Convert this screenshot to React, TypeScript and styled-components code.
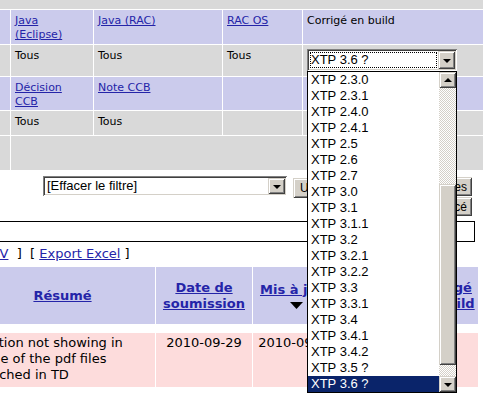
import React from "react";
import styled, { createGlobalStyle } from "styled-components";

const WIN_FACE = "#d4d0c8";
const GRAY = "#d9d9d9";
const LAVENDER = "#cbcbec";
const PINK = "#fddcdc";
const LINK = "#2424a8";

const RAISED = `inset 1px 1px ${WIN_FACE}, inset -1px -1px #404040, inset 2px 2px #fff, inset -2px -2px #808080`;
const SUNKEN = `inset 1px 1px #808080, inset -1px -1px #fff, inset 2px 2px #404040, inset -2px -2px ${WIN_FACE}`;

const VERSIONS = [
  "2.3.0", "2.3.1", "2.4.0", "2.4.1", "2.5", "2.6", "2.7", "3.0", "3.1", "3.1.1",
  "3.2", "3.2.1", "3.2.2", "3.3", "3.3.1", "3.4", "3.4.1", "3.4.2", "3.5 ?", "3.6 ?",
].map((v) => `XTP ${v}`);

const GlobalStyle = createGlobalStyle`
  html, body {
    margin: 0;
    padding: 0;
    background: #fff;
  }
  body {
    font-family: Verdana, "DejaVu Sans", sans-serif;
    color: #000;
  }
`;

const Viewport = styled.div`
  width: 483px;
  height: 398px;
  overflow: hidden;
  background: #fff;
`;

// the page is scrolled a little to the right
const Page = styled.div`
  width: 513px;
  margin-left: -30px;
  display: flex;
  flex-direction: column;
`;

const FilterTable = styled.div`
  display: grid;
  grid-template-columns: 40px 82px 128px 79px 1fr;
  grid-template-rows: 9px 34px 31px 33px 24px 34px;
  gap: 1px;
  font-size: 11px;
  line-height: 14px;
`;

const Cell = styled.div<{ $tone: "gray" | "lav"; $span?: number }>`
  position: relative;
  background: ${(p) => (p.$tone === "lav" ? LAVENDER : GRAY)};
  padding: 4px 8px 4px 4px;
  grid-column: ${(p) => (p.$span ? `span ${p.$span}` : "auto")};
  min-width: 0;
`;

const Link = styled.a<{ $bold?: boolean }>`
  color: ${LINK};
  text-decoration: underline;
  font-weight: ${(p) => (p.$bold ? 700 : 400)};
  cursor: pointer;
`;

const SelectFrame = styled.div<{ $w: number; $h: number }>`
  position: relative;
  box-sizing: border-box;
  width: ${(p) => p.$w}px;
  height: ${(p) => p.$h}px;
  padding: 2px;
  display: flex;
  background: #fff;
  box-shadow: ${SUNKEN};
  font-family: "Liberation Sans", Arial, sans-serif;
  font-size: 13px;
  line-height: 16px;
`;

const SelectValue = styled.div<{ $focused?: boolean }>`
  flex: 1;
  display: flex;
  align-items: center;
  margin: 1px;
  padding: 0 1px;
  white-space: nowrap;
  overflow: hidden;
  outline: ${(p) => (p.$focused ? "1px dotted #000" : "none")};
  outline-offset: -1px;
`;

const ArrowButton = styled.div<{ $h?: number }>`
  width: 17px;
  height: ${(p) => (p.$h ? `${p.$h}px` : "auto")};
  flex-shrink: 0;
  display: flex;
  align-items: center;
  justify-content: center;
  background: ${WIN_FACE};
  box-shadow: ${RAISED};
`;

const Arrow = styled.span<{ $dir: "up" | "down" }>`
  width: 0;
  height: 0;
  border-left: 4px solid transparent;
  border-right: 4px solid transparent;
  ${(p) =>
    p.$dir === "down"
      ? "border-top: 4px solid #000; margin-top: 1px;"
      : "border-bottom: 4px solid #000; margin-bottom: 1px;"}
`;

const DropList = styled.div`
  position: absolute;
  top: 100%;
  left: 0;
  z-index: 10;
  width: 150px;
  box-sizing: border-box;
  border: 1px solid #000;
  background: #fff;
  display: flex;
`;

const OptionList = styled.div`
  flex: 1;
  display: flex;
  flex-direction: column;
`;

const Option = styled.div<{ $selected?: boolean }>`
  height: 16px;
  line-height: 16px;
  padding-left: 3px;
  white-space: nowrap;
  background: ${(p) => (p.$selected ? "#0a246a" : "transparent")};
  color: ${(p) => (p.$selected ? "#fff" : "#000")};
`;

const ScrollBar = styled.div`
  width: 17px;
  display: flex;
  flex-direction: column;
`;

const ScrollTrack = styled.div<{ $h: number }>`
  height: ${(p) => p.$h}px;
  background-color: #fff;
  background-image: repeating-conic-gradient(${WIN_FACE} 0 25%, #fff 0 50%);
  background-size: 2px 2px;
`;

const ScrollThumb = styled.div<{ $h: number }>`
  height: ${(p) => p.$h}px;
  background: ${WIN_FACE};
  box-shadow: ${RAISED};
`;

const FilterBar = styled.div`
  height: 51px;
  box-sizing: border-box;
  padding: 6px 11px 0 73px;
  display: flex;
  align-items: flex-start;
`;

const WinButton = styled.button<{ $h?: number }>`
  height: ${(p) => p.$h ?? 19}px;
  padding: 0 5px;
  border: none;
  background: ${WIN_FACE};
  box-shadow: ${RAISED};
  font-family: "Liberation Sans", Arial, sans-serif;
  font-size: 12px;
  color: #000;
  white-space: nowrap;
`;

const ApplyButton = styled(WinButton)`
  margin: 2px 0 0 6px;
  width: 56px;
  text-align: left;
  padding-left: 7px;
`;

const ButtonStack = styled.div`
  margin-left: auto;
  margin-top: 1px;
  display: flex;
  flex-direction: column;
  align-items: flex-end;
  gap: 1px;
`;

const TabStrip = styled.div`
  height: 21px;
  box-sizing: border-box;
  margin-right: 8px;
  border: 1px solid #000;
`;

const ExportLine = styled.div`
  margin: 4px 0 5px;
  padding: 0 3px;
  font-size: 13px;
  line-height: 16px;
  white-space: nowrap;
`;

const ResultTable = styled.div`
  width: 508px;
  display: grid;
  grid-template-columns: 185px 96px 86px 71px 66px;
  grid-template-rows: 57px auto;
  gap: 9px 1px;
  font-size: 13px;
  line-height: 16px;
`;

const HeadCell = styled.div`
  background: ${LAVENDER};
  padding: 3px 2px;
  display: flex;
  flex-direction: column;
  align-items: center;
  justify-content: center;
  text-align: center;
`;

const SortArrow = styled.svg`
  display: block;
  margin-top: 4px;
  height: 8px;
`;

const DataCell = styled.div<{ $align?: "left" | "center" }>`
  background: ${PINK};
  padding: 2px 3px 4px;
  text-align: ${(p) => p.$align ?? "center"};
`;

const VersionSelect: React.FC<{ value: string; options: string[] }> = ({
  value,
  options,
}) => (
  <SelectFrame $w={150} $h={22}>
    <SelectValue $focused>{value}</SelectValue>
    <ArrowButton>
      <Arrow $dir="down" />
    </ArrowButton>
    <DropList>
      <OptionList>
        {options.map((o) => (
          <Option key={o} $selected={o === value}>
            {o}
          </Option>
        ))}
      </OptionList>
      <ScrollBar>
        <ArrowButton $h={16}>
          <Arrow $dir="up" />
        </ArrowButton>
        <ScrollTrack $h={96} />
        <ScrollThumb $h={181} />
        <ScrollTrack $h={11} />
        <ArrowButton $h={16}>
          <Arrow $dir="down" />
        </ArrowButton>
      </ScrollBar>
    </DropList>
  </SelectFrame>
);

export default function App() {
  return (
    <>
      <GlobalStyle />
      <Viewport>
        <Page>
          <FilterTable>
            <Cell $tone="gray" $span={5} />

            <Cell $tone="lav" />
            <Cell $tone="lav">
              <Link>Java (Eclipse)</Link>
            </Cell>
            <Cell $tone="lav">
              <Link>Java (RAC)</Link>
            </Cell>
            <Cell $tone="lav">
              <Link>RAC OS</Link>
            </Cell>
            <Cell $tone="lav">Corrigé en build</Cell>

            <Cell $tone="gray" />
            <Cell $tone="gray">Tous</Cell>
            <Cell $tone="gray">Tous</Cell>
            <Cell $tone="gray">Tous</Cell>
            <Cell $tone="gray">
              <VersionSelect value="XTP 3.6 ?" options={VERSIONS} />
            </Cell>

            <Cell $tone="lav" />
            <Cell $tone="lav">
              <Link>Décision CCB</Link>
            </Cell>
            <Cell $tone="lav">
              <Link>Note CCB</Link>
            </Cell>
            <Cell $tone="lav" />
            <Cell $tone="lav" />

            <Cell $tone="gray" />
            <Cell $tone="gray">Tous</Cell>
            <Cell $tone="gray">Tous</Cell>
            <Cell $tone="gray" />
            <Cell $tone="gray" />

            <Cell $tone="gray" />
            <Cell $tone="gray" $span={4} />
          </FilterTable>

          <FilterBar>
            <SelectFrame $w={244} $h={20}>
              <SelectValue>[Effacer le filtre]</SelectValue>
              <ArrowButton>
                <Arrow $dir="down" />
              </ArrowButton>
            </SelectFrame>
            <ApplyButton $h={20}>Utiliser</ApplyButton>
            <ButtonStack>
              <WinButton>Colonnes</WinButton>
              <WinButton>Avancé</WinButton>
            </ButtonStack>
          </FilterBar>

          <TabStrip />

          <ExportLine>
            [ <Link>CSV</Link>{"\u00a0 ]\u00a0 [ "}
            <Link>Export Excel</Link> ]
          </ExportLine>

          <ResultTable>
            <HeadCell>
              <Link $bold>Résumé</Link>
            </HeadCell>
            <HeadCell>
              <Link $bold>Date de soumission</Link>
            </HeadCell>
            <HeadCell>
              <Link $bold>Mis à jour</Link>
              <SortArrow viewBox="0 0 13 8" width="13">
                <polygon points="0,0 13,0 6.5,7" fill="#000" />
              </SortArrow>
            </HeadCell>
            <HeadCell>
              <Link $bold>Statut</Link>
            </HeadCell>
            <HeadCell>
              <Link $bold>Corrigé en build</Link>
            </HeadCell>

            <DataCell $align="left">
              Position not showing in some of the pdf files attached in TD
            </DataCell>
            <DataCell>2010-09-29</DataCell>
            <DataCell>2010-09-30</DataCell>
            <DataCell>Nouveau</DataCell>
            <DataCell />
          </ResultTable>
        </Page>
      </Viewport>
    </>
  );
}
